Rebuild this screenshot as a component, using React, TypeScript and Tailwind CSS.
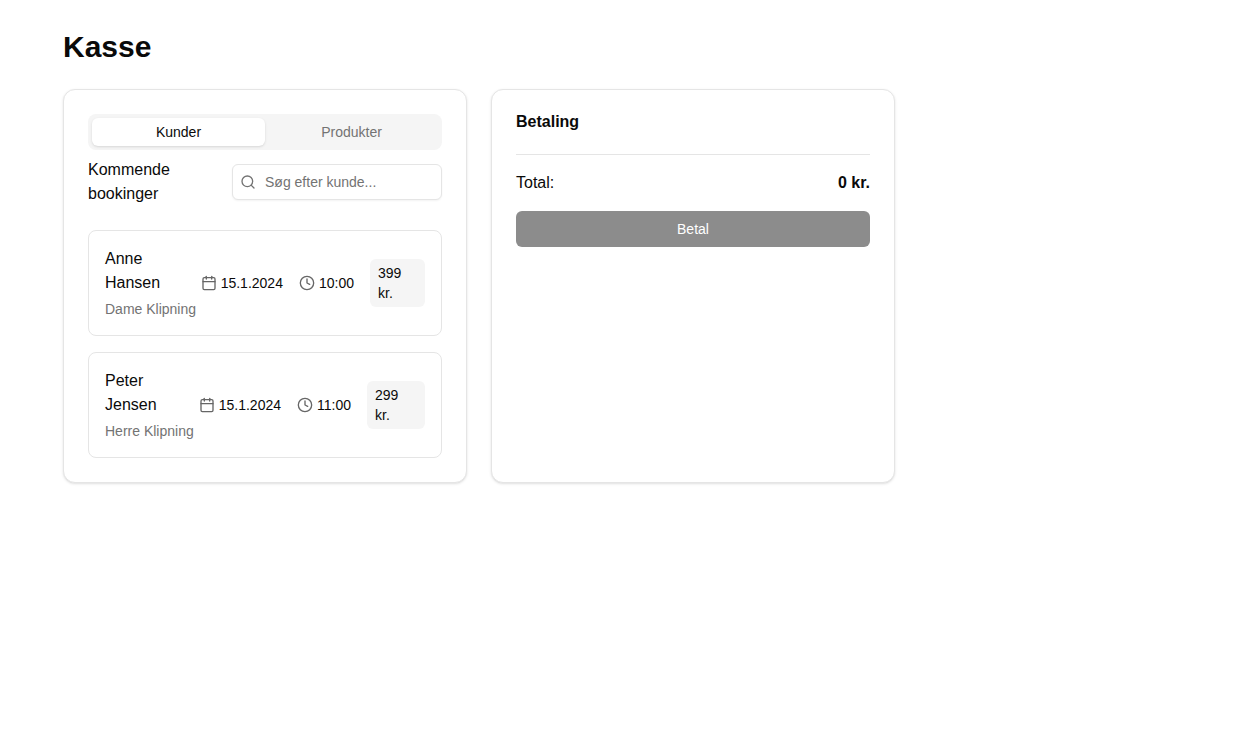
import { Calendar, Clock, Search } from "lucide-react"

const bookings = [
  { id: 1, name: "Anne Hansen", service: "Dame Klipning", date: "15.1.2024", time: "10:00", price: "399 kr.", priceWidth: "w-[55px]" },
  { id: 2, name: "Peter Jensen", service: "Herre Klipning", date: "15.1.2024", time: "11:00", price: "299 kr.", priceWidth: "w-[58px]" },
]

function BookingRow({ booking }: { booking: (typeof bookings)[number] }) {
  return (
    <div className="flex items-center gap-4 rounded-lg border border-[#e5e5e5] bg-white p-4">
      <div className="min-w-0 flex-1">
        <p className="max-w-[80px] text-base leading-6">{booking.name}</p>
        <p className="mt-1 whitespace-nowrap text-sm leading-5 text-[#737373]">{booking.service}</p>
      </div>
      <div className="flex shrink-0 items-center gap-1 text-sm leading-5">
        <Calendar className="h-4 w-4 text-[#666666]" strokeWidth={2} />
        <span>{booking.date}</span>
      </div>
      <div className="flex shrink-0 items-center gap-1 text-sm leading-5">
        <Clock className="h-4 w-4 text-[#666666]" strokeWidth={2} />
        <span>{booking.time}</span>
      </div>
      <div className={`${booking.priceWidth} shrink-0 rounded-md bg-[#f5f5f5] px-2 py-1 text-sm leading-5`}>
        {booking.price}
      </div>
    </div>
  )
}

export default function App() {
  return (
    <div className="min-h-[751px] bg-white pl-[63px] pt-[29px] font-['Liberation_Sans',Arial,sans-serif] text-[#0a0a0a]">
      <h1 className="mb-6 text-3xl font-bold leading-9">Kasse</h1>

      <div className="flex items-stretch gap-6">
        <section className="w-[404px] rounded-xl border border-[#e5e5e5] bg-white p-6 shadow-sm">
          <div className="flex h-9 items-center rounded-lg bg-[#f5f5f5] p-1 text-sm">
            <button className="h-7 flex-1 rounded-md bg-white shadow-sm">Kunder</button>
            <button className="h-7 flex-1 text-[#737373]">Produkter</button>
          </div>

          <div className="mb-6 mt-2 flex items-center justify-between">
            <h2 className="w-[110px] text-base leading-6">Kommende bookinger</h2>
            <div className="relative w-[210px]">
              <Search className="absolute left-2 top-[10px] h-4 w-4 text-[#737373]" />
              <input
                placeholder="Søg efter kunde..."
                className="h-9 w-full rounded-md border border-[#e5e5e5] bg-white pl-8 pr-3 text-sm shadow-xs outline-none placeholder:text-[#737373]"
              />
            </div>
          </div>

          <div className="flex flex-col gap-4">
            {bookings.map((booking) => (
              <BookingRow key={booking.id} booking={booking} />
            ))}
          </div>
        </section>

        <section className="w-[404px] rounded-xl border border-[#e5e5e5] bg-white p-6 shadow-sm">
          <div className="border-b border-[#e5e5e5] pb-6">
            <h2 className="text-base font-bold leading-none">Betaling</h2>
          </div>
          <div className="mt-4 flex items-center justify-between text-base leading-6">
            <span>Total:</span>
            <span className="font-bold">0 kr.</span>
          </div>
          <button className="mt-4 h-9 w-full rounded-md bg-[#8c8c8c] text-sm font-medium text-white">Betal</button>
        </section>
      </div>
    </div>
  )
}
